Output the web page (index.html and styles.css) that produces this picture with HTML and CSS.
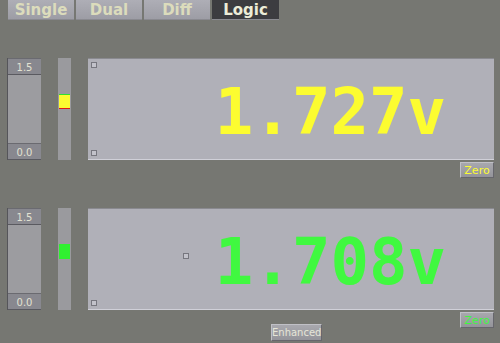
FILE: index.html
```html
<!DOCTYPE html>
<html lang="en">
<head>
  <meta charset="UTF-8">
  <title>Meter</title>
  <link rel="stylesheet" href="styles.css">
</head>
<body>

  <!-- mode tabs -->
  <div class="tabs">
    <div class="tab">Single</div>
    <div class="tab">Dual</div>
    <div class="tab">Diff</div>
    <div class="tab active">Logic</div>
  </div>

  <!-- channel 1 -->
  <div class="channel first">
    <div class="row">
      <div class="range">
        <div class="range-label">1.5</div>
        <div class="range-body"></div>
        <div class="range-label">0.0</div>
      </div>
      <div class="bar">
        <div class="thumb yellow" style="top: 36px;"></div>
      </div>
      <div class="panel">
        <span class="corner top-left"></span>
        <span class="corner bottom-left"></span>
        <div class="value yellow-text">1.727v</div>
      </div>
    </div>
    <div class="foot">
      <button class="zero yellow-text">Zero</button>
    </div>
  </div>

  <!-- channel 2 -->
  <div class="channel">
    <div class="row">
      <div class="range">
        <div class="range-label">1.5</div>
        <div class="range-body"></div>
        <div class="range-label">0.0</div>
      </div>
      <div class="bar">
        <div class="thumb green" style="top: 36px;"></div>
      </div>
      <div class="panel">
        <span class="corner bottom-left"></span>
        <span class="corner marker"></span>
        <div class="value green-text">1.708v</div>
      </div>
    </div>
    <div class="foot">
      <button class="enhanced">Enhanced</button>
      <button class="zero green-text">Zero</button>
    </div>
  </div>

</body>
</html>
```

FILE: styles.css
```css
body {
  margin: 0;
  background-color: #767772;
  font-family: 'DejaVu Sans', sans-serif;
  width: 500px;
  height: 343px;
  overflow: hidden;
}
.tabs {
  display: flex;
  gap: 2px;
  padding-left: 8px;
  height: 20px;
}
.tab {
  width: 66px;
  height: 20px;
  line-height: 20px;
  text-align: center;
  background: linear-gradient(#aeaeb6, #9c9ca4);
  color: #dcdcbc;
  font-weight: bold;
  font-size: 15px;
  box-shadow: inset 0 -1px 0 #8a8a90;
}
.tab.active {
  background: #3c3c40;
  color: #ececd8;
  width: 67px;
}
.channel {
  margin-top: 30px;
}
.channel.first {
  margin-top: 38px;
}
.row {
  display: flex;
  height: 102px;
}
.range {
  margin-left: 7px;
  width: 34px;
  display: flex;
  flex-direction: column;
  border-left: 1px solid #55555a;
  box-sizing: border-box;
}
.range-label {
  height: 17px;
  line-height: 17px;
  background: #88888f;
  color: #e2e2d2;
  font-size: 10px;
  text-align: center;
  border-top: 1px solid #6a6a70;
  border-bottom: 1px solid #5a5a60;
  box-sizing: border-box;
}
.range-body {
  flex: 1;
  background: #9c9ca0;
}
.bar {
  position: relative;
  margin-left: 17px;
  width: 13px;
  background: #9a9a9e;
}
.thumb {
  position: absolute;
  left: 1px;
  width: 11px;
  height: 15px;
  box-sizing: border-box;
}
.thumb.yellow {
  background: #fcfc30;
  border-top: 1px solid #30e030;
  border-bottom: 1px solid #e01818;
}
.thumb.green {
  background: #30f030;
}
.panel {
  position: relative;
  margin-left: 17px;
  width: 406px;
  background: #b0b0b8;
  border-top: 1px solid #8a8a90;
  border-bottom: 1px solid #d0d0d8;
  box-sizing: border-box;
  display: flex;
  align-items: center;
  justify-content: flex-end;
  padding-right: 48px;
  padding-top: 5px;
}
.corner {
  position: absolute;
  width: 6px;
  height: 6px;
  background: #c2c2ca;
  border: 1px solid #76767e;
  box-sizing: border-box;
}
.top-left {
  left: 3px;
  top: 3px;
}
.bottom-left {
  left: 3px;
  bottom: 3px;
}
.marker {
  left: 95px;
  top: 44px;
}
.value {
  font-family: 'DejaVu Sans Mono', monospace;
  font-weight: bold;
  font-size: 64px;
  line-height: 1;
}
.yellow-text {
  color: #fcfc30;
}
.green-text {
  color: #40f840;
}
.foot {
  display: flex;
  justify-content: flex-end;
  margin-top: 2px;
  margin-right: 6px;
}
button {
  font-family: 'DejaVu Sans', sans-serif;
  font-size: 11px;
  background: linear-gradient(#a8a8ae, #94949a);
  border: 1px solid #66666c;
  border-top-color: #c0c0c6;
  border-left-color: #c0c0c6;
  padding: 0;
  cursor: pointer;
}
.zero {
  width: 34px;
  height: 16px;
  align-self: flex-start;
}
.enhanced {
  width: 51px;
  height: 17px;
  font-size: 10px;
  color: #e6e6d8;
  align-self: flex-end;
  margin-top: 12px;
  margin-right: 138px;
}
```
